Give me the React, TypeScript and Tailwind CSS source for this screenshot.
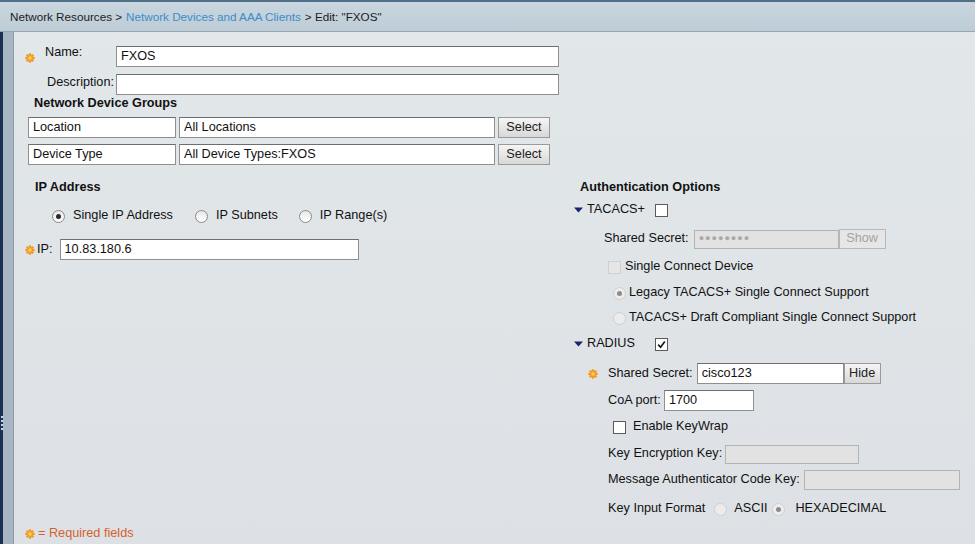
import React from "react";

function Star() {
  const petals = [0, 45, 90, 135, 180, 225, 270, 315];
  return (
    <svg width="10" height="10" viewBox="0 0 10 10" className="shrink-0">
      {petals.map((a) => (
        <circle
          key={a}
          cx={5 + 3.5 * Math.cos((a * Math.PI) / 180)}
          cy={5 + 3.5 * Math.sin((a * Math.PI) / 180)}
          r="1.3"
          fill="#f39a1e"
        />
      ))}
      <circle cx="5" cy="5" r="3" fill="#f39a1e" />
      <circle cx="5" cy="5" r="1.7" fill="#fbd36a" />
    </svg>
  );
}

function Tri() {
  return (
    <svg width="9" height="6" viewBox="0 0 9 6" className="shrink-0">
      <polygon points="0,0.5 9,0.5 4.5,5.5" fill="#1b2470" />
    </svg>
  );
}

function Field({ className, value, disabled }: { className: string; value?: string; disabled?: boolean }) {
  return (
    <div
      className={
        "flex items-center px-[4px] border " +
        (disabled
          ? "bg-[#e2e2e2] border-[#b4b4b4] text-[#9a9a9a] "
          : "bg-white border-[#8f8f8f] border-t-[#6e6e6e] text-[#111] ") +
        className
      }
    >
      {value}
    </div>
  );
}

function Btn({ className, label, disabled }: { className: string; label: string; disabled?: boolean }) {
  return (
    <div
      className={
        "flex items-center justify-center border " +
        (disabled
          ? "bg-[#e6e6e6] border-[#b8b8b8] text-[#a3a3a3] "
          : "bg-gradient-to-b from-[#f5f5f5] to-[#d8d8d8] border-[#9a9a9a] text-[#222] ") +
        className
      }
    >
      {label}
    </div>
  );
}

function Radio({ checked, disabled }: { checked?: boolean; disabled?: boolean }) {
  return (
    <div
      className={
        "w-[13px] h-[13px] rounded-full border flex items-center justify-center shrink-0 " +
        (disabled ? "border-[#d0d0d0] bg-[#ececec]" : "border-[#8a8a8a] bg-gradient-to-b from-[#e8e8e8] to-white")
      }
    >
      {checked && (
        <div className={"w-[5px] h-[5px] rounded-full " + (disabled ? "bg-[#8c8c8c]" : "bg-[#2a2a2a]")} />
      )}
    </div>
  );
}

function Check({ checked, disabled }: { checked?: boolean; disabled?: boolean }) {
  return (
    <div
      className={
        "w-[13px] h-[13px] border flex items-center justify-center shrink-0 " +
        (disabled ? "border-[#cfcfcf] bg-[#e6e6e6]" : "border-[#5a5a5a] bg-white")
      }
    >
      {checked && (
        <svg width="9" height="9" viewBox="0 0 9 9">
          <polyline points="1.2,4.6 3.6,7.2 7.8,1.5" fill="none" stroke="#111" strokeWidth="1.6" />
        </svg>
      )}
    </div>
  );
}

export default function App() {
  return (
    <div className="w-[975px] h-[544px] overflow-hidden font-['Liberation_Sans',Arial,sans-serif] text-[#111]">
      {/* breadcrumb */}
      <div className="h-[32px] border-t-2 border-t-[#50708a] border-b border-b-[#97a6b1] bg-gradient-to-b from-[#c9d6df] to-[#bdccd6] flex items-center pl-[10px] text-[11.7px] text-[#1d1d1d]">
        Network Resources &gt;
        <span className="text-[#3b8dca] mx-[4px]">Network Devices and AAA Clients</span>
        &gt; Edit: "FXOS"
      </div>

      <div className="flex h-[512px]">
        <div className="w-[3px] bg-[#1c3254] flex flex-col items-center pt-[384px] gap-[2px]">
          <div className="w-[2px] h-[2px] bg-[#c9d5e6]" />
          <div className="w-[2px] h-[2px] bg-[#c9d5e6]" />
          <div className="w-[2px] h-[2px] bg-[#c9d5e6]" />
          <div className="w-[2px] h-[2px] bg-[#c9d5e6]" />
        </div>
        <div className="w-[11px] bg-[#a8b6c4] border-r border-[#8d9aa6]" />

        <div className="flex-1 flex flex-col bg-gradient-to-b from-[#e2e7ea] to-[#dde1e5] pt-[14px] pl-[14px] text-[12.7px]">
          {/* name */}
          <div className="flex h-[21px]">
            <div className="w-[88px] flex items-start">
              <div className="ml-[-3px] mt-[7px]">
                <Star />
              </div>
              <span className="ml-[10px] leading-[15px] mt-[-1px]">Name:</span>
            </div>
            <Field className="w-[443px] h-[21px]" value="FXOS" />
          </div>

          {/* description */}
          <div className="flex h-[21px] mt-[7px]">
            <div className="w-[88px] text-right pr-[2px] leading-[15px] pt-[1px]">Description:</div>
            <Field className="w-[443px] h-[21px]" />
          </div>

          <div className="h-[18px] flex items-center pl-[6px] font-bold">Network Device Groups</div>

          <div className="flex h-[21px] mt-[4px]">
            <Field className="w-[148px] h-[21px]" value="Location" />
            <Field className="w-[316px] h-[21px] ml-[3px]" value="All Locations" />
            <Btn className="w-[52px] h-[21px] ml-[3px]" label="Select" />
          </div>
          <div className="flex h-[21px] mt-[6px]">
            <Field className="w-[148px] h-[21px]" value="Device Type" />
            <Field className="w-[316px] h-[21px] ml-[3px]" value="All Device Types:FXOS" />
            <Btn className="w-[52px] h-[21px] ml-[3px]" label="Select" />
          </div>

          <div className="flex mt-[13px]">
            {/* ip address */}
            <div className="w-[546px] flex flex-col">
              <div className="h-[20px] flex items-center pl-[7px] font-bold">IP Address</div>
              <div className="h-[20px] mt-[8px] flex items-center pl-[24px]">
                <Radio checked />
                <span className="ml-[8px]">Single IP Address</span>
                <div className="ml-[22px]">
                  <Radio />
                </div>
                <span className="ml-[8px]">IP Subnets</span>
                <div className="ml-[21px]">
                  <Radio />
                </div>
                <span className="ml-[8px]">IP Range(s)</span>
              </div>
              <div className="h-[21px] mt-[13px] flex items-center">
                <div className="ml-[-3px]">
                  <Star />
                </div>
                <span className="ml-[2px]">IP:</span>
                <Field className="w-[299px] h-[21px] ml-[7px]" value="10.83.180.6" />
              </div>
            </div>

            {/* authentication options */}
            <div className="flex flex-col">
              <div className="h-[20px] flex items-center pl-[6px] font-bold">Authentication Options</div>

              <div className="h-[20px] mt-[2px] flex items-center">
                <Tri />
                <span className="ml-[4px]">TACACS+</span>
                <div className="ml-[10px]">
                  <Check />
                </div>
              </div>

              <div className="h-[20px] mt-[9px] flex items-center pl-[30px]">
                <span>Shared Secret:</span>
                <Field
                  className="w-[145px] h-[19px] ml-[5px] text-[9px] tracking-[1px] text-[#a8a8a8]"
                  value="●●●●●●●●"
                  disabled
                />
                <Btn className="w-[47px] h-[20px]" label="Show" disabled />
              </div>

              <div className="h-[20px] mt-[8px] flex items-center pl-[34px]">
                <Check disabled />
                <span className="ml-[4px]">Single Connect Device</span>
              </div>

              <div className="h-[20px] mt-[6px] flex items-center pl-[39px]">
                <Radio checked disabled />
                <span className="ml-[3px]">Legacy TACACS+ Single Connect Support</span>
              </div>

              <div className="h-[20px] mt-[5px] flex items-center pl-[39px]">
                <Radio disabled />
                <span className="ml-[3px]">TACACS+ Draft Compliant Single Connect Support</span>
              </div>

              <div className="h-[20px] mt-[6px] flex items-center">
                <Tri />
                <span className="ml-[4px]">RADIUS</span>
                <div className="ml-[20px]">
                  <Check checked />
                </div>
              </div>

              <div className="h-[21px] mt-[9px] flex items-center pl-[14px]">
                <Star />
                <span className="ml-[10px]">Shared Secret:</span>
                <Field className="w-[147px] h-[21px] ml-[4px]" value="cisco123" />
                <Btn className="w-[37px] h-[21px]" label="Hide" />
              </div>

              <div className="h-[21px] mt-[6px] flex items-center pl-[34px]">
                <span>CoA port:</span>
                <Field className="w-[90px] h-[21px] ml-[3px]" value="1700" />
              </div>

              <div className="h-[20px] mt-[6px] flex items-center pl-[39px]">
                <Check />
                <span className="ml-[7px]">Enable KeyWrap</span>
              </div>

              <div className="h-[20px] mt-[7px] flex items-center pl-[34px]">
                <span>Key Encryption Key:</span>
                <Field className="w-[134px] h-[19px] ml-[3px]" disabled />
              </div>

              <div className="h-[20px] mt-[6px] flex items-center pl-[34px]">
                <span>Message Authenticator Code Key:</span>
                <Field className="w-[156px] h-[20px] ml-[4px]" disabled />
              </div>

              <div className="h-[20px] mt-[9px] flex items-center pl-[34px]">
                <span>Key Input Format</span>
                <div className="ml-[9px]">
                  <Radio disabled />
                </div>
                <span className="ml-[7px]">ASCII</span>
                <div className="ml-[5px]">
                  <Radio checked disabled />
                </div>
                <span className="ml-[10px]">HEXADECIMAL</span>
              </div>
            </div>
          </div>

          <div className="mt-auto h-[20px] flex items-center text-[#d5622c]">
            <div className="ml-[-3px]">
              <Star />
            </div>
            <span className="ml-[3px]">= Required fields</span>
          </div>
        </div>
      </div>
    </div>
  );
}
